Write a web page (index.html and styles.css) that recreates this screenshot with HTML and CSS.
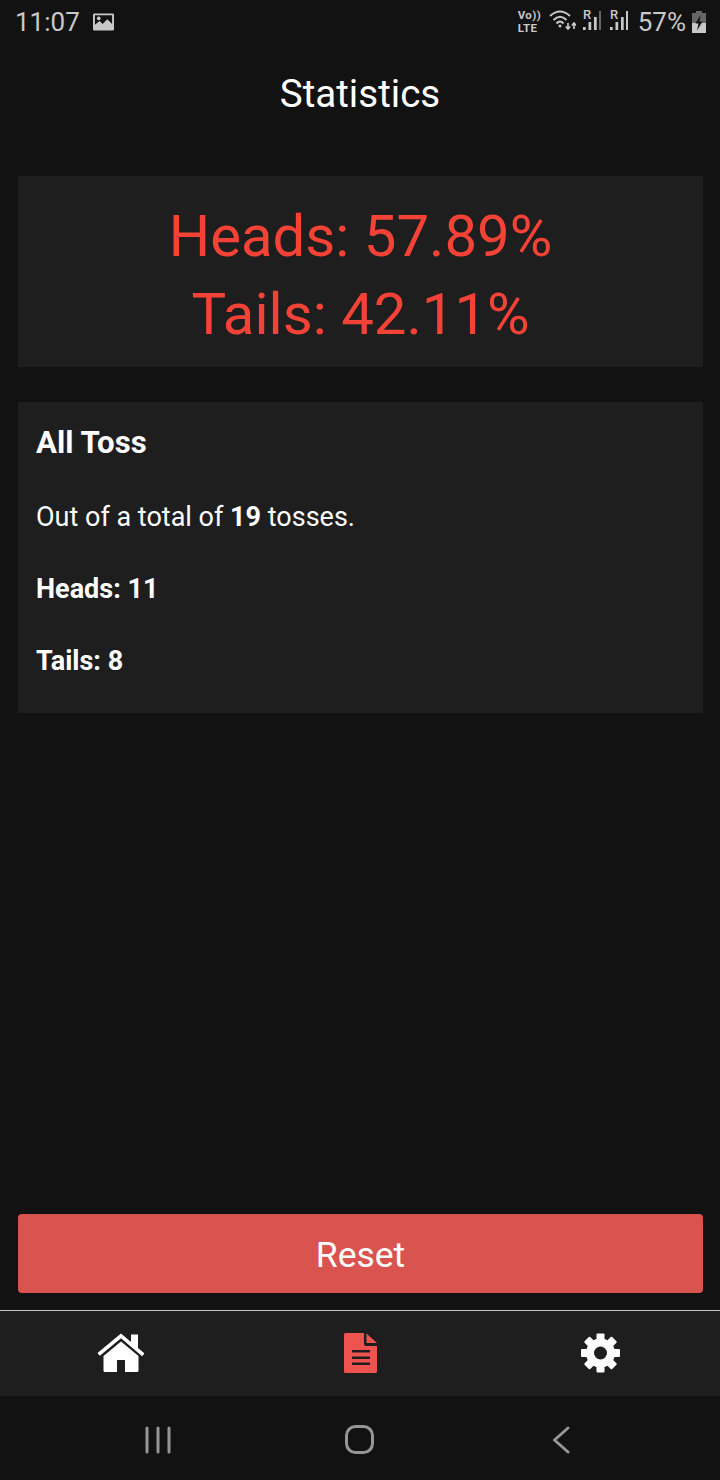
FILE: index.html
```html
<!DOCTYPE html>
<html lang="en">
<head>
	<meta charset="UTF-8">
	<title>Statistics</title>
	<link rel="stylesheet" href="styles.css">
</head>
<body>
<div class="screen">
	<div class="status">
		<div class="status-left">
			<span class="clock">11:07</span>
			<svg class="ico-pic" viewBox="0 0 22 18"><path fill="#c8c8c8" fill-rule="evenodd" d="M1.500 0h19A1.500 1.500 0 0 1 22 1.500v15a1.500 1.500 0 0 1-1.500 1.500h-19A1.500 1.500 0 0 1 0 16.500v-15A1.500 1.500 0 0 1 1.500 0zM2 2v10l5-4 3 3 5-5 5 5V2zM6 3.200a2 2 0 1 0 .01 0z"/></svg>
		</div>
		<div class="status-right">
			<span class="volte">Vo))<br>LTE</span>
			<svg class="ico-wifi" viewBox="0 0 27 22" fill="none" stroke="#c8c8c8" stroke-width="2">
				<path d="M1 6Q11-3 21 6"/>
				<path d="M4.500 10Q11 3.500 17.500 10"/>
				<path d="M7.500 13.500Q11 9.500 14.500 13.500"/>
				<circle cx="11" cy="16" r="1.500" fill="#c8c8c8" stroke="none"/>
				<path d="M19 13v6M16.800 16.500 19 19l2.200-2.500M25 19v-6M22.800 15.500 25 13l2.200 2.500" stroke-width="1.700"/>
			</svg>
			<svg class="ico-sig" viewBox="0 -4 18 25">
				<text x="0" y="8.500" class="sig-r">R</text>
				<rect x="0" y="17" width="2.700" height="3" fill="#c8c8c8"/>
				<rect x="5.500" y="12" width="2.700" height="8" fill="#c8c8c8"/>
				<rect x="11" y="7" width="2.700" height="13" fill="#c8c8c8"/>
				<rect x="16" y="1" width="2" height="19" fill="#666"/>
			</svg>
			<svg class="ico-sig" viewBox="0 -4 18 25">
				<text x="0" y="8.500" class="sig-r">R</text>
				<rect x="0" y="17" width="2.700" height="3" fill="#c8c8c8"/>
				<rect x="5.500" y="12" width="2.700" height="8" fill="#c8c8c8"/>
				<rect x="11" y="7" width="2.700" height="13" fill="#c8c8c8"/>
				<rect x="16" y="1" width="2" height="19" fill="#c8c8c8"/>
			</svg>
			<span class="batt-num">57%</span>
			<svg class="ico-batt" viewBox="0 0 14 22">
				<path fill="#666" d="M4 0h6v2h4v10H0V2h4z"/>
				<path fill="#c8c8c8" d="M0 12h14v10H0z"/>
				<path fill="#121212" d="M8.500 4 3.500 12.500h3l-1.500 7 5.500-9h-3z"/>
			</svg>
		</div>
	</div>

	<div class="title">Statistics</div>

	<div class="card percent">
		<div>Heads: 57.89%</div>
		<div>Tails: 42.11%</div>
	</div>

	<div class="card detail">
		<h2>All Toss</h2>
		<p>Out of a total of <b>19</b> tosses.</p>
		<p><b>Heads: 11</b></p>
		<p><b>Tails: 8</b></p>
	</div>

	<div class="spacer"></div>

	<div class="btn">Reset</div>

	<div class="tabs">
		<div class="tab">
			<svg class="ico-home" viewBox="-1 0 48 40">
				<path fill="#fff" d="M24 .500 34 9V1.500h7v13.400l6.500 5.500-2.300 2.800L24 5.200 2.800 22.800.5 20z"/>
				<path fill="#fff" d="M24 8.500 41.500 23v14.500a1.500 1.500 0 0 1-1.500 1.500H28V27h-8v12H8a1.500 1.500 0 0 1-1.500-1.500V23z"/>
			</svg>
		</div>
		<div class="tab">
			<svg class="ico-file" viewBox="-1 0 34 40">
				<path fill="#ef5350" d="M0 1.500A1.500 1.500 0 0 1 1.500 0H20v11a2 2 0 0 0 2 2h11v25.500a1.500 1.500 0 0 1-1.500 1.500h-30A1.500 1.500 0 0 1 0 38.500z"/>
				<path fill="#ef5350" d="M22.500 .5 33 10H22.500z"/>
				<path fill="#1e1e1e" d="M8 17h18v2.500H8zM8 23.500h18V26H8zM8 29.500h18V32H8z"/>
			</svg>
		</div>
		<div class="tab">
			<svg class="ico-gear" viewBox="0 0 41 40">
				<g fill="#fff">
					<circle cx="20.500" cy="20" r="14.500"/>
					<rect x="16.500" y=".5" width="8" height="9" rx="1"/>
					<rect x="16.500" y="30.500" width="8" height="9" rx="1"/>
					<rect x="1" y="16" width="9" height="8" rx="1"/>
					<rect x="31" y="16" width="9" height="8" rx="1"/>
					<rect x="16.500" y=".5" width="8" height="9" rx="1" transform="rotate(45 20.500 20)"/>
					<rect x="16.500" y="30.500" width="8" height="9" rx="1" transform="rotate(45 20.500 20)"/>
					<rect x="1" y="16" width="9" height="8" rx="1" transform="rotate(45 20.500 20)"/>
					<rect x="31" y="16" width="9" height="8" rx="1" transform="rotate(45 20.500 20)"/>
				</g>
				<circle cx="20.500" cy="20" r="6.500" fill="#1e1e1e"/>
			</svg>
		</div>
	</div>

	<div class="navbar">
		<div class="nav-item">
			<svg class="ico-recent" viewBox="0 0 26 28"><path stroke="#969696" stroke-width="3" stroke-linecap="round" d="M2 2v24M13 2v24M24 2v24"/></svg>
		</div>
		<div class="nav-item">
			<svg class="ico-round" viewBox="0 0 30 30"><rect x="1.500" y="1.500" width="26" height="26" rx="9" fill="none" stroke="#969696" stroke-width="3"/></svg>
		</div>
		<div class="nav-item">
			<svg class="ico-back" viewBox="0 0 18 28"><path fill="none" stroke="#969696" stroke-width="3" stroke-linecap="round" stroke-linejoin="round" d="M15 2 1.500 14 15 26"/></svg>
		</div>
	</div>
</div>
</body>
</html>
```

FILE: styles.css
```css
*{
	margin:0; padding:0; box-sizing:border-box;
}
body{
	background:#121212;
	font-family:Roboto,"Liberation Sans",sans-serif;
	color:#fff;
}
.screen{
	width:720px; height:1480px;
	display:flex; flex-direction:column;
}

/* status bar */
.status{
	height:44px; padding:0 14px 0 15px;
	display:flex; justify-content:space-between;
	color:#c8c8c8;
}
.status-left,.status-right{
	display:flex; align-items:center;
}
.clock{
	font-size:26px;
}
.ico-pic{
	width:21px; height:18px; margin-left:13px;
}
.volte{
	font-size:11.500px; line-height:13.500px; font-weight:700;
	letter-spacing:.4px;
	width:21px; white-space:nowrap;
}
.ico-wifi{
	width:27px; height:22px; margin:0 0 2px 10px;
}
.ico-sig{
	width:18px; height:25px; margin:6px 0 0 9px;
	align-self:flex-start;
}
.ico-wifi + .ico-sig{
	margin-left:7px;
}
.sig-r{
	font:500 13px Roboto,sans-serif; fill:#c8c8c8;
}
.batt-num{
	font-size:26px; margin-left:10px;
}
.ico-batt{
	width:14px; height:22px; margin-left:6px;
}

.title{
	height:132px; padding-top:6px;
	font-size:38.600px; line-height:88px;
	text-align:center;
}

.card{
	background:#1e1e1e;
	margin:0 17px 0 18px;
}
.percent{
	height:191px; padding-top:21px;
	color:#f44336;
	font-size:58.100px; line-height:78px;
	text-align:center;
}
.detail{
	height:311px; margin-top:35px;
	padding:21px 18px 0;
}
.detail h2{
	font-size:31.200px; line-height:40px; font-weight:700;
}
.detail p{
	font-size:27px; line-height:36px;
	margin-top:36px;
}
.detail b{
	font-weight:700;
}

.spacer{
	flex:1;
}

.btn{
	height:79px; margin:0 17px 0 18px;
	background:#d9534f; border-radius:4px;
	font-size:35.500px; line-height:82px;
	text-align:center;
}

.tabs{
	height:86px; margin-top:17px;
	background:#1e1e1e;
	border-top:1px solid #c4c4c4;
	display:flex;
}
.tab{
	flex:1;
	display:flex; align-items:center; justify-content:center;
	padding-bottom:2px;
}
.ico-home{
	width:48px; height:40px;
}
.ico-file{
	width:34px; height:40px;
}
.ico-gear{
	width:41px; height:40px;
}

.navbar{
	height:84px; padding:0 57px;
	background:#121212;
	display:flex;
}
.nav-item{
	flex:1;
	display:flex; align-items:center; justify-content:center;
	padding-top:4px;
}
.ico-recent{
	width:26px; height:28px;
}
.ico-round{
	width:30px; height:30px;
}
.ico-back{
	width:18px; height:28px;
}
```
